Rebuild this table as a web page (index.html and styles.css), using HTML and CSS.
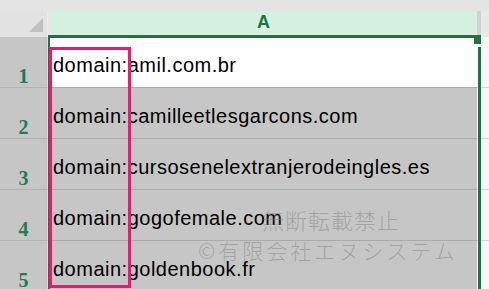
FILE: index.html
```html
<!DOCTYPE html>
<html lang="ja">
<head>
<meta charset="utf-8">
<title>Sheet</title>
<link rel="stylesheet" href="styles.css">
</head>
<body>
<div class="sheet">
  <div class="topbar"></div>
  <div class="grid">
    <div class="corner"><span class="tri"></span></div>
    <div class="colhead">A</div>
    <div class="colhead-next"></div>

    <div class="rowhead">1</div>
    <div class="cell active">domain:amil.com.br</div>
    <div class="cell-next"></div>

    <div class="rowhead">2</div>
    <div class="cell">domain:camilleetlesgarcons.com</div>
    <div class="cell-next"></div>

    <div class="rowhead">3</div>
    <div class="cell">domain:cursosenelextranjerodeingles.es</div>
    <div class="cell-next"></div>

    <div class="rowhead">4</div>
    <div class="cell">domain:gogofemale.com</div>
    <div class="cell-next"></div>

    <div class="rowhead">5</div>
    <div class="cell">domain:goldenbook.fr</div>
    <div class="cell-next"></div>
  </div>
  <div class="selection"><span class="handle"></span></div>
  <div class="highlight"></div>
  <div class="watermark">
    <div class="wm1">無断転載禁止</div>
    <div class="wm2">©有限会社エヌシステム</div>
  </div>
</div>
</body>
</html>
```

FILE: styles.css
```css
html, body {
  margin: 0;
  padding: 0;
  background: #e4e4e4;
}
.sheet {
  position: relative;
  width: 489px;
  height: 289px;
  overflow: hidden;
  background: #e4e4e4;
}
.topbar {
  height: 11px;
  background: #e4e4e4;
}
.grid {
  display: grid;
  grid-template-columns: 48px 429px 1fr;
  grid-template-rows: 26px repeat(5, 51px);
}
.corner {
  position: relative;
  background: #e2e2e2;
  border-right: 1px solid #ececec;
}
.tri {
  position: absolute;
  right: 4px;
  bottom: 5px;
  width: 0;
  height: 0;
  border-left: 14px solid transparent;
  border-bottom: 14px solid #c0c0c0;
}
.colhead {
  background: #d3f0e0;
  border-left: 2px solid #e6e6e6;
  color: #217346;
  font-family: "Liberation Sans", Arial, sans-serif;
  font-weight: bold;
  font-size: 18px;
  line-height: 22px;
  text-align: center;
}
.colhead-next {
  background: #e8e8e8;
  border-left: 4px solid #d2d2d2;
}
.rowhead {
  background: #c6c6c6;
  border-right: 1px solid #dadada;
  border-bottom: 1px solid #b2b2b2;
  color: #237a55;
  font-family: "Liberation Serif", "Times New Roman", serif;
  font-weight: bold;
  font-size: 20px;
  line-height: 20px;
  padding-top: 29px;
  box-sizing: border-box;
  text-align: center;
}
.cell {
  background: #c6c6c6;
  border-bottom: 1px solid #aaaaaa;
  color: #000;
  font-family: "Liberation Sans", Arial, sans-serif;
  font-size: 20px;
  letter-spacing: 0.5px;
  line-height: 22px;
  padding: 17px 0 0 5px;
  box-sizing: border-box;
  white-space: nowrap;
}
.cell.active {
  background: #ffffff;
}
.cell-next {
  background: #f7f7f7;
  border-bottom: 1px solid #d6d6d6;
}
.selection {
  position: absolute;
  left: 48px;
  top: 35px;
  width: 433px;
  height: 270px;
  box-sizing: border-box;
  border-top: 3px solid #217346;
  border-left: 2px solid #217346;
  border-right: 3px solid #217346;
}
.handle {
  position: absolute;
  right: -3px;
  top: -3px;
  width: 7px;
  height: 9px;
  background: #217346;
  border-bottom: 3px solid #ffffff;
}
.highlight {
  position: absolute;
  left: 49px;
  top: 47px;
  width: 82px;
  height: 241px;
  box-sizing: border-box;
  border: 3px solid #f5146e;
}
.watermark {
  position: absolute;
  left: 190px;
  top: 208px;
  color: rgba(120, 120, 120, 0.45);
  font-family: "Noto Sans CJK JP", "Noto Sans", sans-serif;
  font-weight: 300;
  white-space: nowrap;
}
.wm1 {
  margin-left: 72px;
  font-size: 22px;
  line-height: 22px;
  letter-spacing: 1px;
}
.wm2 {
  margin-top: 10px;
  margin-left: 8px;
  font-size: 21px;
  line-height: 21px;
  letter-spacing: 3px;
}
```
